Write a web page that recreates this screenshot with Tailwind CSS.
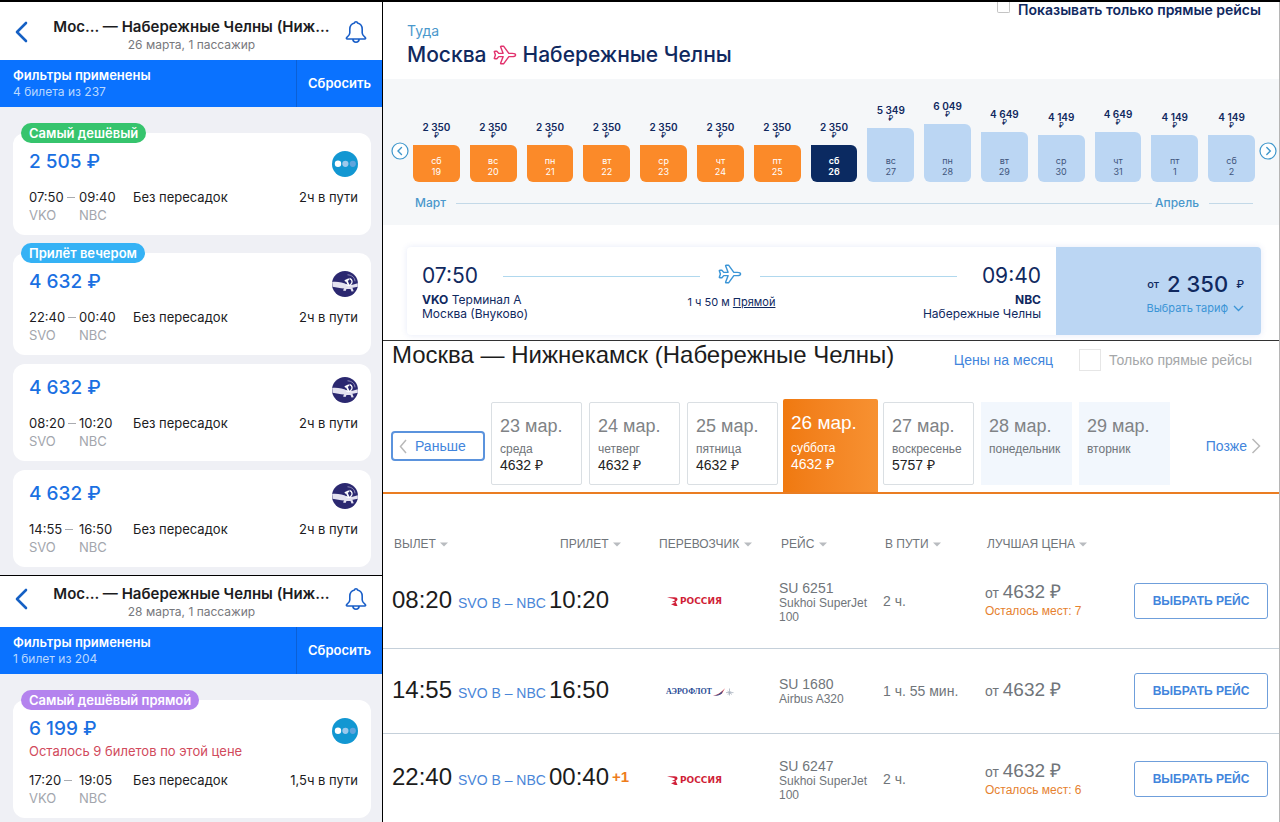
<!DOCTYPE html>
<html lang="ru">
<head>
<meta charset="utf-8">
<meta name="viewport" content="width=device-width, initial-scale=1">
<title>Москва — Набережные Челны</title>
<script src="https://cdn.jsdelivr.net/npm/@tailwindcss/browser@4"></script>
</head>
<body class="bg-white">
<svg class="hidden" aria-hidden="true">
  <symbol id="back" viewBox="0 0 14 22"><path d="M12 2 3 11l9 9" fill="none" stroke="#1560c4" stroke-width="2.6" stroke-linecap="round" stroke-linejoin="round"/></symbol>
  <symbol id="bell" viewBox="0 0 22 24"><path d="M11 1.8c-.9 0-1.5.6-1.6 1.3C6.300 3.900 4.800 6.300 4.800 9.300v3.700c0 2-1.200 2.900-2.900 4.300-.9.8-.6 1.700.5 1.700h17.200c1.100 0 1.400-.9.5-1.700-1.700-1.400-2.900-2.300-2.900-4.300V9.300c0-3-1.500-5.400-4.600-6.200-.1-.7-.7-1.300-1.600-1.300zM7.800 19.200c.2 1.900 1.500 3.100 3.200 3.100s3-1.200 3.200-3.100" fill="none" stroke="#1a5fc8" stroke-width="1.600" stroke-linejoin="round"/></symbol>
  <symbol id="dots" viewBox="0 0 26 26"><circle cx="13" cy="13" r="13" fill="#1297d2"/><circle cx="6" cy="12.800" r="3.200" fill="#fff"/><circle cx="13.400" cy="12.800" r="3.100" fill="#9cc9ec"/><circle cx="20.800" cy="12.800" r="3.100" fill="#5fa4dd"/></symbol>
  <symbol id="winged" viewBox="0 0 26 26"><circle cx="13" cy="13" r="13" fill="#2b2870"/><path d="M.2 11c3.500-.4 6.500.1 9.300.5l3.500 1 2.500 1.800 5-.6 5.300-1.500v3.600l-5 .9-8.800.8c-4-.2-7.500-1.200-11.500-1.800z" fill="#e4e2f0"/><path d="M12.500 16.500 11 19.500l2.500.5 1-2h4l1 2.500 2.200-.3-1.500-4z" fill="#e4e2f0"/><path d="M15.500 3.800c4.500.2 7.300 3 7.500 6.500" fill="none" stroke="#8f8cb8" stroke-width="1"/><path d="M17.500 7.500c3 .8 3.500 4.300 1 6.300-1.500 1-3.200.8-4.300-.2" fill="none" stroke="#fff" stroke-width="1.300"/><path d="m12.800 10 4.200-1.800M14.600 9.300l2.200 5.200" stroke="#fff" stroke-width="1.800"/></symbol>
  <symbol id="plane" viewBox="0 0 25 20"><path d="M2 6h2l2 2.300h4.500L8 1.700c-.2-.6 0-.9.600-.9H11l5.500 7.500H20c2.200 0 3.500.7 3.500 1.700s-1.300 1.700-3.500 1.700h-3.500L11 19.200H8.600c-.6 0-.8-.3-.6-.9l2.500-6.600H6L4 14H2c-.5 0-.7-.3-.6-.7L2.500 10 1.400 6.700C1.300 6.300 1.500 6 2 6z" fill="none" stroke="currentColor" stroke-width="1.500" stroke-linejoin="round"/></symbol>
  <symbol id="left" viewBox="0 0 18 18"><circle cx="9" cy="9" r="8" fill="#fff" stroke="currentColor" stroke-width="1.200"/><path d="M10.500 5.500 7 9l3.500 3.500" fill="none" stroke="currentColor" stroke-width="1.400" stroke-linecap="round"/></symbol>
  <symbol id="right" viewBox="0 0 18 18"><circle cx="9" cy="9" r="8" fill="#fff" stroke="currentColor" stroke-width="1.200"/><path d="M7.800 5.500 11.300 9l-3.500 3.500" fill="none" stroke="currentColor" stroke-width="1.400" stroke-linecap="round"/></symbol>
  <symbol id="caret" viewBox="0 0 8 5"><path d="M0 .5h8L4 4.500z" fill="#b9bcc0"/></symbol>
  <symbol id="rossiya" viewBox="0 0 11 9"><path d="M0 .6C3 0 7 0 9 .5c2.300.8 1.800 3.200-.5 4.100L10.500 9H8L4 7.200c2.300-.5 3.500-1 4-1.600L5 4.800c2-.5 3.200-1.300 2.800-2C7 1.600 3.500 1.400 0 .6z" fill="#d01f38"/></symbol>
  <symbol id="tail" viewBox="0 0 22 10"><path d="M0 8.500c5 0 8-2.500 13-7.300L10 6.500C7 8.200 3 9 0 8.500z" fill="#d2434f"/><path d="M2 9c4-.8 6.500-2.700 9-5.400L9.500 6.800C7.500 8.200 5 9 2 9z" fill="#33518e"/><path d="M14 5.600h7.500M17.500 1.500v7M15.500 4l4.500 3.500M15.800 7.800l3.200-3.600" stroke="#a9b3bf" stroke-width=".8"/></symbol>
</svg>

<div class="grid min-h-screen grid-cols-[383px_1fr] border-t-2 border-black">

  <!-- Mobile results -->
  <div class="flex flex-col border-r border-black bg-[#eff0f5] font-['Inter',sans-serif] text-[13px] text-[#1c1c1e]">
    <section>
      <header class="flex items-center justify-between bg-white pt-[15px] pr-[15px] pb-[7px] pl-[14px]">
        <button aria-label="Назад" class="mb-[7px] w-6 shrink-0"><svg class="h-[22px] w-[14px]"><use href="#back"/></svg></button>
        <div class="text-center">
          <h1 class="text-[15px] leading-5 font-semibold whitespace-nowrap">Мос... — Набережные Челны (Ниж...</h1>
          <p class="text-[12px] leading-4 text-[#77787c]">26 марта, 1 пассажир</p>
        </div>
        <button aria-label="Уведомления" class="mb-[7px] shrink-0"><svg class="h-6 w-[22px]"><use href="#bell"/></svg></button>
      </header>
      <div class="flex h-[47px] bg-[#0a72ff] text-white">
        <div class="flex flex-1 flex-col justify-center pt-px pl-[13px]">
          <p class="leading-4 font-semibold">Фильтры применены</p>
          <p class="text-[12px] leading-[18px] text-[#b9d8ff]">4 билета из 237</p>
        </div>
        <button class="w-[86px] border-l border-[#0b60d6] font-semibold">Сбросить</button>
      </div>
      <div class="flex flex-col gap-[9px] pt-[26px] pr-[11px] pb-2 pl-[13px]">
        <article class="relative mb-[9px] rounded-xl bg-white pt-[15px] pr-[13px] pb-[11px] pl-4">
          <span class="absolute -top-[10px] left-2 rounded-full bg-[#36c46d] px-2 leading-5 font-semibold text-white">Самый дешёвый</span>
          <div class="flex h-7 items-center justify-between"><p class="text-[19px] font-medium text-[#1a70e2]">2 505 ₽</p><svg class="mt-[3px] size-[26px]"><use href="#dots"/></svg></div>
          <div class="mt-3 grid grid-cols-[50px_54px_1fr_auto] leading-[18px]">
            <p class="flex items-center gap-[3px]">07:50<span class="h-px w-2 bg-[#a9abb0]"></span></p><p>09:40</p><p>Без пересадок</p><p>2ч в пути</p>
            <p class="text-[#a3a6ad]">VKO</p><p class="text-[#a3a6ad]">NBC</p>
          </div>
        </article>
        <article class="relative rounded-xl bg-white pt-[15px] pr-[13px] pb-[11px] pl-4">
          <span class="absolute -top-[10px] left-2 rounded-full bg-[#35b2f5] px-2 leading-5 font-semibold text-white">Прилёт вечером</span>
          <div class="flex h-7 items-center justify-between"><p class="text-[19px] font-medium text-[#1a70e2]">4 632 ₽</p><svg class="mt-[3px] size-[26px]"><use href="#winged"/></svg></div>
          <div class="mt-3 grid grid-cols-[50px_54px_1fr_auto] leading-[18px]">
            <p class="flex items-center gap-[3px]">22:40<span class="h-px w-2 bg-[#a9abb0]"></span></p><p>00:40</p><p>Без пересадок</p><p>2ч в пути</p>
            <p class="text-[#a3a6ad]">SVO</p><p class="text-[#a3a6ad]">NBC</p>
          </div>
        </article>
        <article class="rounded-xl bg-white pt-[10px] pr-[13px] pb-[11px] pl-4">
          <div class="flex h-7 items-center justify-between"><p class="text-[19px] font-medium text-[#1a70e2]">4 632 ₽</p><svg class="mt-[3px] size-[26px]"><use href="#winged"/></svg></div>
          <div class="mt-3 grid grid-cols-[50px_54px_1fr_auto] leading-[18px]">
            <p class="flex items-center gap-[3px]">08:20<span class="h-px w-2 bg-[#a9abb0]"></span></p><p>10:20</p><p>Без пересадок</p><p>2ч в пути</p>
            <p class="text-[#a3a6ad]">SVO</p><p class="text-[#a3a6ad]">NBC</p>
          </div>
        </article>
        <article class="rounded-xl bg-white pt-[10px] pr-[13px] pb-[11px] pl-4">
          <div class="flex h-7 items-center justify-between"><p class="text-[19px] font-medium text-[#1a70e2]">4 632 ₽</p><svg class="mt-[3px] size-[26px]"><use href="#winged"/></svg></div>
          <div class="mt-3 grid grid-cols-[50px_54px_1fr_auto] leading-[18px]">
            <p class="flex items-center gap-[3px]">14:55<span class="h-px w-2 bg-[#a9abb0]"></span></p><p>16:50</p><p>Без пересадок</p><p>2ч в пути</p>
            <p class="text-[#a3a6ad]">SVO</p><p class="text-[#a3a6ad]">NBC</p>
          </div>
        </article>
      </div>
    </section>

    <section class="border-t border-black">
      <header class="flex items-center justify-between bg-white pt-2 pr-[15px] pb-[7px] pl-[14px]">
        <button aria-label="Назад" class="mb-[7px] w-6 shrink-0"><svg class="h-[22px] w-[14px]"><use href="#back"/></svg></button>
        <div class="text-center">
          <h1 class="text-[15px] leading-5 font-semibold whitespace-nowrap">Мос... — Набережные Челны (Ниж...</h1>
          <p class="text-[12px] leading-4 text-[#77787c]">28 марта, 1 пассажир</p>
        </div>
        <button aria-label="Уведомления" class="mb-[7px] shrink-0"><svg class="h-6 w-[22px]"><use href="#bell"/></svg></button>
      </header>
      <div class="flex h-[47px] bg-[#0a72ff] text-white">
        <div class="flex flex-1 flex-col justify-center pt-px pl-[13px]">
          <p class="leading-4 font-semibold">Фильтры применены</p>
          <p class="text-[12px] leading-[18px] text-[#b9d8ff]">1 билет из 204</p>
        </div>
        <button class="w-[86px] border-l border-[#0b60d6] font-semibold">Сбросить</button>
      </div>
      <div class="pt-[26px] pr-[11px] pb-[3px] pl-[13px]">
        <article class="relative rounded-xl bg-white pt-[15px] pr-[13px] pb-[11px] pl-4">
          <span class="absolute -top-[10px] left-2 rounded-full bg-[#b483ee] px-2 leading-5 font-semibold text-white">Самый дешёвый прямой</span>
          <div class="flex h-7 items-center justify-between"><p class="text-[19px] font-medium text-[#1a70e2]">6 199 ₽</p><svg class="mt-[3px] size-[26px]"><use href="#dots"/></svg></div>
          <p class="leading-4 text-[#d14a5c]">Осталось 9 билетов по этой цене</p>
          <div class="mt-3 grid grid-cols-[50px_54px_1fr_auto] leading-[18px]">
            <p class="flex items-center gap-[3px]">17:20<span class="h-px w-2 bg-[#a9abb0]"></span></p><p>19:05</p><p>Без пересадок</p><p>1,5ч в пути</p>
            <p class="text-[#a3a6ad]">VKO</p><p class="text-[#a3a6ad]">NBC</p>
          </div>
        </article>
      </div>
    </section>
  </div>

  <div class="flex min-w-0 flex-col border-r border-[#b5b5b5]">

    <!-- Fare calendar -->
    <section class="border-b border-[#333] pb-[5px] font-['Inter',sans-serif] text-[#10295f]">
      <div class="pr-[18px] pb-[10px] pl-6">
        <label class="flex h-[19px] items-start justify-end gap-2 text-[14px] leading-4 font-semibold"><input type="checkbox" class="h-[11px] w-[13px] appearance-none rounded-b-xs border border-t-0 border-[#c4c4c4]">Показывать только прямые рейсы</label>
        <p class="text-[14px] leading-5 text-[#4a98cc]">Туда</p>
        <h2 class="flex h-7 items-center gap-[6px] text-[21px] font-medium">Москва <svg class="h-5 w-6 text-[#e2336e]"><use href="#plane"/></svg> Набережные Челны</h2>
      </div>
      <div class="bg-[#f5f7f9] pb-[13px]">
        <div class="flex h-[103px] items-end gap-1 pr-[2px] pl-2">
          <button aria-label="Раньше" class="mb-[22px] shrink-0 text-[#3f97cc]"><svg class="size-[18px]"><use href="#left"/></svg></button>
          <ol id="days" class="grid flex-1 grid-cols-15 items-end gap-x-[10px] text-center"></ol>
          <button aria-label="Позже" class="mb-[22px] shrink-0 text-[#3f97cc]"><svg class="size-[18px]"><use href="#right"/></svg></button>
        </div>
        <div class="mt-3 flex items-center pr-[26px] pl-8 text-[12px] leading-[18px] font-medium text-[#4a98cc]">
          <span>Март</span><span class="ml-[10px] h-px flex-1 bg-[#c3d9e8]"></span><span class="ml-[3px]">Апрель</span><span class="ml-[10px] h-px w-11 bg-[#c3d9e8]"></span>
        </div>
      </div>
      <article class="mt-[22px] mr-[18px] ml-6 flex h-[88px] rounded-[4px] shadow-[0_0_6px_rgba(60,90,200,0.13)]">
        <div class="flex-1 px-[15px] pt-[15px]">
          <div class="flex h-7 items-center text-[21px]">
            <span>07:50</span><span class="ml-[25px] h-px flex-1 bg-[#b0d8ee]"></span><svg class="mx-[18px] mb-1 h-5 w-6 text-[#3b95d6]"><use href="#plane"/></svg><span class="mr-[25px] h-px flex-1 bg-[#b0d8ee]"></span><span>09:40</span>
          </div>
          <div class="mt-[3px] grid grid-cols-[1fr_auto_1fr] text-[12px] leading-[14px]">
            <p><b>VKO</b> Терминал А<br>Москва (Внуково)</p>
            <p class="pt-[2px] text-[11px]">1 ч 50 м <a href="#" class="underline">Прямой</a></p>
            <p class="text-right"><b>NBC</b><br>Набережные Челны</p>
          </div>
        </div>
        <div class="flex w-[205px] flex-col items-end rounded-r-[4px] bg-[#bbd6f3] pt-[22px] pr-[17px]">
          <p class="flex h-[30px] items-center gap-2 text-[11px] font-medium"><span>от</span><span class="text-[22px]">2 350</span><span>₽</span></p>
          <button class="flex items-center gap-[5px] text-[11px] leading-[18px] text-[#3b95d6]">Выбрать тариф<svg class="h-[7px] w-[11px]" viewBox="0 0 11 7"><path d="m1 1 4.500 4.500L10 1" fill="none" stroke="currentColor" stroke-width="1.300"/></svg></button>
        </div>
      </article>
    </section>

    <!-- Schedule -->
    <section class="flex-1 font-['Liberation_Sans',Arial,sans-serif] text-[14px] text-[#70757a]">
      <div class="flex h-[58px] items-start pl-[9px] pr-[27px]">
        <h2 class="flex-1 text-[24px] leading-7 whitespace-nowrap text-[#1c1c1c]">Москва — Нижнекамск (Набережные Челны)</h2>
        <a href="#" class="mt-[9px] mr-[26px] leading-5 whitespace-nowrap text-[#4285dc]">Цены на месяц</a>
        <label class="mt-2 flex items-center gap-2 whitespace-nowrap text-[#a5a7a9]"><input type="checkbox" class="size-[22px] appearance-none border border-[#e6e6e6] bg-white">Только прямые рейсы</label>
      </div>
      <div class="flex items-start gap-[7px] border-b-2 border-[#ea7d22] pr-[18px] pl-2">
        <button class="mt-8 -mr-px flex h-[30px] w-[94px] items-center gap-2 rounded-[4px] border-2 border-[#5b93dd] pl-[6px] text-[#4285dc]"><svg class="h-[15px] w-2" viewBox="0 0 8 15"><path d="M7 1 1.500 7.500 7 14" fill="none" stroke="#b9b9b9" stroke-width="1.500"/></svg>Раньше</button>
        <button class="mt-[3px] h-[83px] w-[91px] rounded-xs border border-[#dadfe3] pl-2 text-left"><span class="block text-[18px] leading-6 text-[#808386]">23 мар.</span><span class="mt-1 block text-[12px] leading-[15px]">среда</span><span class="block leading-4 text-[#222]">4632 ₽</span></button>
        <button class="mt-[3px] h-[83px] w-[91px] rounded-xs border border-[#dadfe3] pl-2 text-left"><span class="block text-[18px] leading-6 text-[#808386]">24 мар.</span><span class="mt-1 block text-[12px] leading-[15px]">четверг</span><span class="block leading-4 text-[#222]">4632 ₽</span></button>
        <button class="mt-[3px] h-[83px] w-[91px] rounded-xs border border-[#dadfe3] pl-2 text-left"><span class="block text-[18px] leading-6 text-[#808386]">25 мар.</span><span class="mt-1 block text-[12px] leading-[15px]">пятница</span><span class="block leading-4 text-[#222]">4632 ₽</span></button>
        <button class="-mx-[2px] h-[93px] w-[95px] rounded-t-xs bg-linear-to-r from-[#f0790f] to-[#f79131] pb-2 pl-2 text-left text-white"><span class="block text-[19px] leading-6">26 мар.</span><span class="mt-[6px] block text-[12px] leading-[15px]">суббота</span><span class="block leading-4">4632 ₽</span></button>
        <button class="mt-[3px] h-[83px] w-[91px] rounded-xs border border-[#dadfe3] pl-2 text-left"><span class="block text-[18px] leading-6 text-[#808386]">27 мар.</span><span class="mt-1 block text-[12px] leading-[15px]">воскресенье</span><span class="block leading-4 text-[#222]">5757 ₽</span></button>
        <button class="mt-[3px] h-[83px] w-[91px] bg-[#f2f7fd] pb-4 pl-2 text-left"><span class="block text-[18px] leading-6 text-[#808386]">28 мар.</span><span class="mt-1 block text-[12px] leading-[15px]">понедельник</span></button>
        <button class="mt-[3px] h-[83px] w-[91px] bg-[#f2f7fd] pb-4 pl-2 text-left"><span class="block text-[18px] leading-6 text-[#808386]">29 мар.</span><span class="mt-1 block text-[12px] leading-[15px]">вторник</span></button>
        <button class="mt-8 ml-auto flex h-[30px] items-center gap-1 text-[#4285dc]">Позже<svg class="h-4 w-[10px]" viewBox="0 0 10 16"><path d="m1.500 1 7 7-7 7" fill="none" stroke="#b9b9b9" stroke-width="1.500"/></svg></button>
      </div>
      <table class="w-full table-fixed text-left">
        <colgroup><col class="w-[166px]"><col class="w-[110px]"><col class="w-[120px]"><col class="w-[104px]"><col class="w-[102px]"><col class="w-[145px]"><col></colgroup>
        <thead>
          <tr class="h-[60px] align-bottom text-[12px] leading-5 whitespace-nowrap">
            <th class="pl-[11px] font-normal">ВЫЛЕТ <svg class="ml-px inline h-[5px] w-2"><use href="#caret"/></svg></th>
            <th class="pl-[11px] font-normal">ПРИЛЕТ <svg class="ml-px inline h-[5px] w-2"><use href="#caret"/></svg></th>
            <th class="font-normal">ПЕРЕВОЗЧИК <svg class="ml-px inline h-[5px] w-2"><use href="#caret"/></svg></th>
            <th class="pl-[2px] font-normal">РЕЙС <svg class="ml-px inline h-[5px] w-2"><use href="#caret"/></svg></th>
            <th class="pl-[2px] font-normal">В ПУТИ <svg class="ml-px inline h-[5px] w-2"><use href="#caret"/></svg></th>
            <th class="pl-[2px] font-normal">ЛУЧШАЯ ЦЕНА <svg class="ml-px inline h-[5px] w-2"><use href="#caret"/></svg></th>
            <td></td>
          </tr>
        </thead>
        <tbody>
          <tr class="h-[94px] border-b border-[#c5d0da]">
            <td class="pb-[2px] pl-[9px] whitespace-nowrap"><span class="text-[24px] text-[#1c1c1c]">08:20</span> <a href="#" class="ml-[2px] text-[14px] text-[#4a86d8]">SVO B – NBC</a></td>
            <td class="pb-[2px] text-[24px] text-[#1c1c1c]">10:20</td>
            <td><span class="ml-2 flex items-center gap-[2px] pt-[2px] font-['DejaVu_Sans',sans-serif] text-[9px] font-bold text-[#d01f38]"><svg class="h-[9px] w-[11px]"><use href="#rossiya"/></svg>РОССИЯ</span></td>
            <td class="pt-[3px] text-[12px] leading-[14px]"><span class="text-[14px]">SU 6251</span><br>Sukhoi SuperJet 100</td>
            <td class="pt-[2px]">2 ч.</td>
            <td class="leading-5">от <span class="text-[19px]">4632 ₽</span><br><span class="block text-[12px] leading-4 text-[#e6822f]">Осталось мест: 7</span></td>
            <td><button class="ml-1 h-9 w-[134px] rounded-[3px] border border-[#6f9fdb] text-[12px] font-bold text-[#4285dc]">ВЫБРАТЬ РЕЙС</button></td>
          </tr>
          <tr class="h-[85px] border-b border-[#c5d0da]">
            <td class="pb-[2px] pl-[9px] whitespace-nowrap"><span class="text-[24px] text-[#1c1c1c]">14:55</span> <a href="#" class="ml-[2px] text-[14px] text-[#4a86d8]">SVO B – NBC</a></td>
            <td class="pb-[2px] text-[24px] text-[#1c1c1c]">16:50</td>
            <td><span class="ml-[7px] flex items-center pt-[2px] font-['Liberation_Serif',serif] text-[8px] font-bold text-[#1f4a94]">АЭРОФЛОТ<svg class="h-[10px] w-[22px]"><use href="#tail"/></svg></span></td>
            <td class="pt-[2px] text-[12px] leading-[14px]"><span class="text-[14px]">SU 1680</span><br>Airbus A320</td>
            <td class="pt-[2px]">1 ч. 55 мин.</td>
            <td class="leading-5">от <span class="text-[19px]">4632 ₽</span></td>
            <td><button class="ml-1 h-9 w-[134px] rounded-[3px] border border-[#6f9fdb] text-[12px] font-bold text-[#4285dc]">ВЫБРАТЬ РЕЙС</button></td>
          </tr>
          <tr class="h-[88px]">
            <td class="pl-[9px] whitespace-nowrap"><span class="text-[24px] text-[#1c1c1c]">22:40</span> <a href="#" class="ml-[2px] text-[14px] text-[#4a86d8]">SVO B – NBC</a></td>
            <td class="whitespace-nowrap"><span class="flex items-center gap-[3px] text-[24px] text-[#1c1c1c]">00:40<span class="text-[15px] font-bold text-[#ee7d1c]">+1</span></span></td>
            <td class="pt-1"><span class="ml-2 flex items-center gap-[2px] pt-[2px] font-['DejaVu_Sans',sans-serif] text-[9px] font-bold text-[#d01f38]"><svg class="h-[9px] w-[11px]"><use href="#rossiya"/></svg>РОССИЯ</span></td>
            <td class="pt-[6px] text-[12px] leading-[14px]"><span class="text-[14px]">SU 6247</span><br>Sukhoi SuperJet 100</td>
            <td class="pt-1">2 ч.</td>
            <td class="pt-1 leading-5">от <span class="text-[19px]">4632 ₽</span><br><span class="block text-[12px] leading-4 text-[#e6822f]">Осталось мест: 6</span></td>
            <td class="pt-1"><button class="ml-1 h-9 w-[134px] rounded-[3px] border border-[#6f9fdb] text-[12px] font-bold text-[#4285dc]">ВЫБРАТЬ РЕЙС</button></td>
          </tr>
        </tbody>
      </table>
    </section>
  </div>
</div>

<script>
  // Bar height in pixels follows the fare of the day.
  const days = [
    ['сб', 19, '2 350', 37], ['вс', 20, '2 350', 37], ['пн', 21, '2 350', 37], ['вт', 22, '2 350', 37],
    ['ср', 23, '2 350', 37], ['чт', 24, '2 350', 37], ['пт', 25, '2 350', 37], ['сб', 26, '2 350', 37],
    ['вс', 27, '5 349', 54], ['пн', 28, '6 049', 58], ['вт', 29, '4 649', 50], ['ср', 30, '4 149', 47],
    ['чт', 31, '4 649', 50], ['пт', 1, '4 149', 47], ['сб', 2, '4 149', 47]
  ];
  document.getElementById('days').innerHTML = days.map(([name, date, fare, height], i) => {
    const tone = i < 7 ? 'bg-[#fb8a29] text-white' : i === 7 ? 'bg-[#0b2a61] text-white font-semibold' : 'bg-[#bbd6f3] text-[#3f557c]';
    return `<li><p class="text-[10px] leading-[10px] font-semibold whitespace-nowrap">${fare}</p>
      <p class="pb-[5px] text-[7px] leading-[8px] font-medium">₽</p>
      <button class="flex w-full flex-col items-center justify-end rounded-[6px] rounded-tl-none pb-[5px] text-[9px] leading-[11px] ${tone}" style="height:${height}px"><span>${name}</span><span>${date}</span></button></li>`;
  }).join('');
</script>
</body>
</html>
